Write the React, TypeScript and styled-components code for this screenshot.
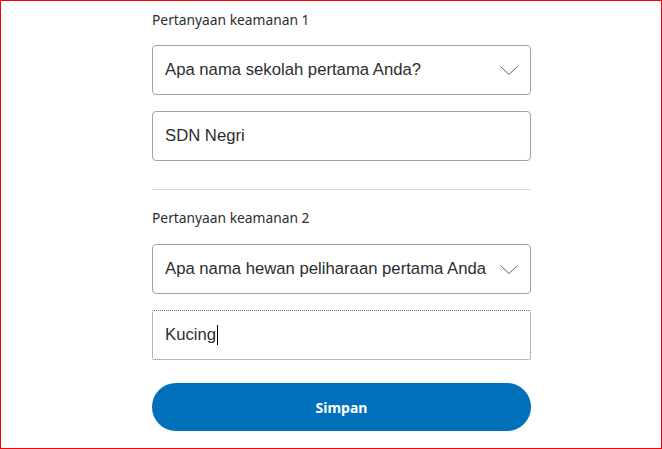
import React from "react";
import styled, { createGlobalStyle } from "styled-components";

const Global = createGlobalStyle`
  html, body { margin: 0; padding: 0; background: #fff; }
  * { box-sizing: border-box; }
`;

const Frame = styled.div`
  width: 662px;
  height: 449px;
  border: 1px solid #ff0000;
  overflow: hidden;
  padding: 11px 0 0 151px;
`;

const Form = styled.div`
  width: 379px;
  display: flex;
  flex-direction: column;
`;

const Label = styled.div<{ $gap?: number }>`
  font-family: "Noto Sans", sans-serif;
  font-size: 13.8px;
  line-height: 16px;
  color: #2c2e2f;
  margin-bottom: ${(p) => p.$gap ?? 17}px;
`;

const Field = styled.div<{ $focused?: boolean }>`
  position: relative;
  height: 50px;
  border: 1px ${(p) => (p.$focused ? "dotted #6f6f6f" : "solid #9da3a6")};
  border-radius: ${(p) => (p.$focused ? "2px" : "4px")};
  display: flex;
  align-items: center;
  padding: 0 43px 0 12px;
  font-family: "Liberation Sans", Arial, sans-serif;
  font-size: 16.7px;
  color: #2c2e2f;
  margin-bottom: 16px;
`;

const Value = styled.span`
  flex: 1;
  min-width: 0;
  white-space: nowrap;
  overflow: hidden;
`;

const Chevron = styled.svg`
  position: absolute;
  right: 12px;
  top: 50%;
  margin-top: -4px;
`;

const Caret = styled.span`
  display: inline-block;
  width: 1px;
  height: 20px;
  background: #000;
  vertical-align: middle;
  margin-left: 1px;
`;

const Divider = styled.hr`
  border: none;
  border-top: 1px solid #d9dcde;
  margin: 12px 0 20px;
`;

const Button = styled.button`
  height: 48px;
  border: none;
  border-radius: 24px;
  background: #0070ba;
  color: #fff;
  font-family: "Noto Sans", sans-serif;
  font-weight: 700;
  font-size: 14px;
  margin-top: 7px;
`;

const ChevronIcon = () => (
  <Chevron width="18" height="9" viewBox="0 0 18 9">
    <path d="M0.5 0.5 L9 8.5 L17.5 0.5" fill="none" stroke="#5a5e61" strokeWidth="1" />
  </Chevron>
);

export default function App() {
  return (
    <Frame>
      <Global />
      <Form>
        <Label>Pertanyaan keamanan 1</Label>
        <Field>
          <Value>Apa nama sekolah pertama Anda?</Value>
          <ChevronIcon />
        </Field>
        <Field>
          <Value>SDN Negri</Value>
        </Field>
        <Divider />
        <Label $gap={18}>Pertanyaan keamanan 2</Label>
        <Field>
          <Value>Apa nama hewan peliharaan pertama Anda?</Value>
          <ChevronIcon />
        </Field>
        <Field $focused>
          <Value>
            Kucing
            <Caret />
          </Value>
        </Field>
        <Button>Simpan</Button>
      </Form>
    </Frame>
  );
}
